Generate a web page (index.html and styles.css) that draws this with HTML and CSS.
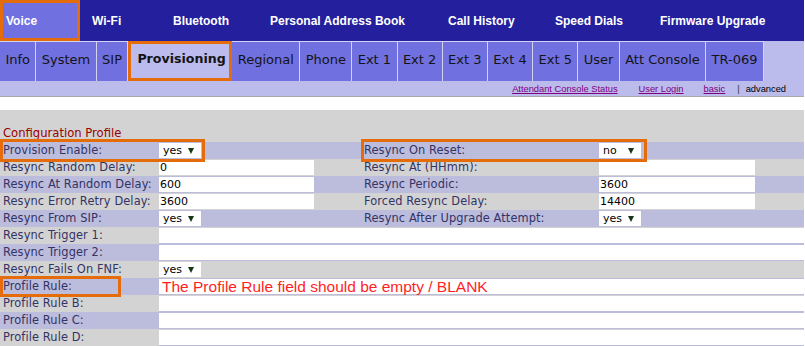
FILE: index.html
```html
<!DOCTYPE html>
<html>
<head>
<meta charset="utf-8">
<link rel="stylesheet" href="styles.css">
</head>
<body>
<div class="page">
  <nav class="topnav">
    <div class="nav-item active">Voice</div>
    <div class="nav-item">Wi-Fi</div>
    <div class="nav-item">Bluetooth</div>
    <div class="nav-item">Personal Address Book</div>
    <div class="nav-item">Call History</div>
    <div class="nav-item">Speed Dials</div>
    <div class="nav-item">Firmware Upgrade</div>
  </nav>
  <div class="tabs">
    <div class="tab">Info</div>
    <div class="tab">System</div>
    <div class="tab">SIP</div>
    <div class="tab selected">Provisioning</div>
    <div class="tab">Regional</div>
    <div class="tab">Phone</div>
    <div class="tab">Ext 1</div>
    <div class="tab">Ext 2</div>
    <div class="tab">Ext 3</div>
    <div class="tab">Ext 4</div>
    <div class="tab">Ext 5</div>
    <div class="tab">User</div>
    <div class="tab">Att Console</div>
    <div class="tab">TR-069</div>
  </div>
  <div class="links">
    <a class="link l-acs">Attendant Console Status</a>
    <a class="link l-user">User Login</a>
    <a class="link">basic</a>
    <span class="sep">|</span>
    <span class="current">advanced</span>
  </div>
  <div class="spacer"></div>
  <div class="content">
    <div class="section-title">Configuration Profile</div>
    <div class="row alt">
      <div class="label">Provision Enable:</div>
      <div class="cell"><div class="select"><span>yes</span><span class="arrow"></span></div></div>
      <div class="label">Resync On Reset:</div>
      <div class="cell"><div class="select"><span>no</span><span class="arrow"></span></div></div>
    </div>
    <div class="row">
      <div class="label">Resync Random Delay:</div>
      <div class="cell"><div class="input">0</div></div>
      <div class="label">Resync At (HHmm):</div>
      <div class="cell"><div class="input r"></div></div>
    </div>
    <div class="row alt">
      <div class="label">Resync At Random Delay:</div>
      <div class="cell"><div class="input">600</div></div>
      <div class="label">Resync Periodic:</div>
      <div class="cell"><div class="input r">3600</div></div>
    </div>
    <div class="row">
      <div class="label">Resync Error Retry Delay:</div>
      <div class="cell"><div class="input">3600</div></div>
      <div class="label">Forced Resync Delay:</div>
      <div class="cell"><div class="input r">14400</div></div>
    </div>
    <div class="row alt">
      <div class="label">Resync From SIP:</div>
      <div class="cell"><div class="select"><span>yes</span><span class="arrow"></span></div></div>
      <div class="label">Resync After Upgrade Attempt:</div>
      <div class="cell"><div class="select"><span>yes</span><span class="arrow"></span></div></div>
    </div>
    <div class="row">
      <div class="label">Resync Trigger 1:</div>
      <div class="cell wide"><div class="input long"></div></div>
    </div>
    <div class="row alt">
      <div class="label">Resync Trigger 2:</div>
      <div class="cell wide"><div class="input long"></div></div>
    </div>
    <div class="row">
      <div class="label">Resync Fails On FNF:</div>
      <div class="cell"><div class="select"><span>yes</span><span class="arrow"></span></div></div>
    </div>
    <div class="row alt">
      <div class="label">Profile Rule:</div>
      <div class="cell wide"><div class="input long note">The Profile Rule field should be empty / BLANK</div></div>
    </div>
    <div class="row">
      <div class="label">Profile Rule B:</div>
      <div class="cell wide"><div class="input long"></div></div>
    </div>
    <div class="row alt">
      <div class="label">Profile Rule C:</div>
      <div class="cell wide"><div class="input long"></div></div>
    </div>
    <div class="row">
      <div class="label">Profile Rule D:</div>
      <div class="cell wide"><div class="input long"></div></div>
    </div>
  </div>
  <div class="callout c-provision"></div>
  <div class="callout c-reset"></div>
  <div class="callout c-rule"></div>
</div>
</body>
</html>
```
FILE: styles.css
```css
body {
  margin: 0;
  background: #ffffff;
}
.page {
  position: relative;
  width: 804px;
  height: 346px;
  overflow: hidden;
  font-family: "DejaVu Sans", Verdana, sans-serif;
}
.topnav {
  display: grid;
  grid-template-columns: 80px 81px 97px 178px 107px 105px 1fr;
  height: 41px;
  background: #241f9c;
}
.nav-item {
  display: flex;
  align-items: center;
  padding-left: 12px;
  color: #ffffff;
  font-family: "Liberation Sans", Arial, sans-serif;
  font-weight: bold;
  font-size: 12px;
  white-space: nowrap;
}
.nav-item.active {
  background: #7070e0;
  border: 3px solid #e46c0a;
  padding-left: 3px;
}
.tabs {
  display: flex;
  height: 40px;
  background: #bbbbec;
}
.tab {
  display: flex;
  align-items: center;
  box-sizing: border-box;
  padding: 0 5.4px 4px;
  background: #7070e0;
  border-top: 1px solid #d4d4f0;
  border-right: 1px solid #d4d4f0;
  font-size: 13px;
  color: #141414;
  white-space: nowrap;
}
.tab.selected {
  width: 104px;
  background: #bbbbee;
  border: 3px solid #e46c0a;
  padding: 0 0 6px 6px;
  font-weight: bold;
  font-size: 12.6px;
}
.links {
  display: flex;
  justify-content: flex-end;
  align-items: center;
  height: 15px;
  padding-right: 18px;
  background: #bbbbec;
  border-bottom: 1px solid #a9a9a9;
  font-family: "Liberation Sans", Arial, sans-serif;
  font-size: 9.3px;
}
.link {
  color: #800080;
  text-decoration: underline;
}
.l-acs {
  margin-right: 21px;
}
.l-user {
  margin-right: 20px;
}
.sep {
  margin: 0 6px 0 12px;
  color: #333333;
}
.current {
  color: #000000;
}
.spacer {
  height: 13px;
  background: #ffffff;
}
.content {
  background: #d3d3d3;
}
.section-title {
  padding: 16px 0 2px 3px;
  line-height: 14px;
  font-size: 11.6px;
  color: #990000;
}
.row {
  display: grid;
  grid-template-columns: 158px 203px 237px 1fr;
  height: 17px;
  background: #d3d3d3;
}
.row.alt {
  background: #bcbcdc;
}
.label {
  padding-left: 3px;
  font-size: 11.4px;
  letter-spacing: 0.1px;
  line-height: 17px;
  color: #333366;
  white-space: nowrap;
}
.cell {
  padding-left: 1px;
}
.wide {
  grid-column: 2 / -1;
}
.input {
  box-sizing: border-box;
  margin-top: 1px;
  width: 155px;
  height: 15px;
  padding-left: 1px;
  background: #ffffff;
  font-size: 11px;
  line-height: 15px;
  color: #000000;
}
.input.r {
  width: 156px;
}
.input.long {
  width: 645px;
  height: 16px;
  border-bottom: 1px solid #bcbcdc;
}
.input.note {
  padding-left: 3px;
  font-family: "Liberation Sans", Arial, sans-serif;
  font-size: 15.5px;
  color: #ff1f1f;
  white-space: nowrap;
}
.select {
  box-sizing: border-box;
  display: flex;
  justify-content: space-between;
  align-items: center;
  margin-top: 1px;
  width: 42px;
  height: 15px;
  padding: 0 7px 0 4px;
  background: #ffffff;
  font-size: 11px;
  color: #000000;
}
.arrow {
  width: 0;
  height: 0;
  border-left: 3px solid transparent;
  border-right: 3px solid transparent;
  border-top: 6px solid #163616;
}
.callout {
  position: absolute;
  box-sizing: border-box;
  border: 3px solid #e46c0a;
}
.c-provision {
  left: 0;
  top: 139px;
  width: 205px;
  height: 23px;
}
.c-reset {
  left: 361px;
  top: 139px;
  width: 286px;
  height: 23px;
}
.c-rule {
  left: 0;
  top: 276px;
  width: 121px;
  height: 21px;
}
```
